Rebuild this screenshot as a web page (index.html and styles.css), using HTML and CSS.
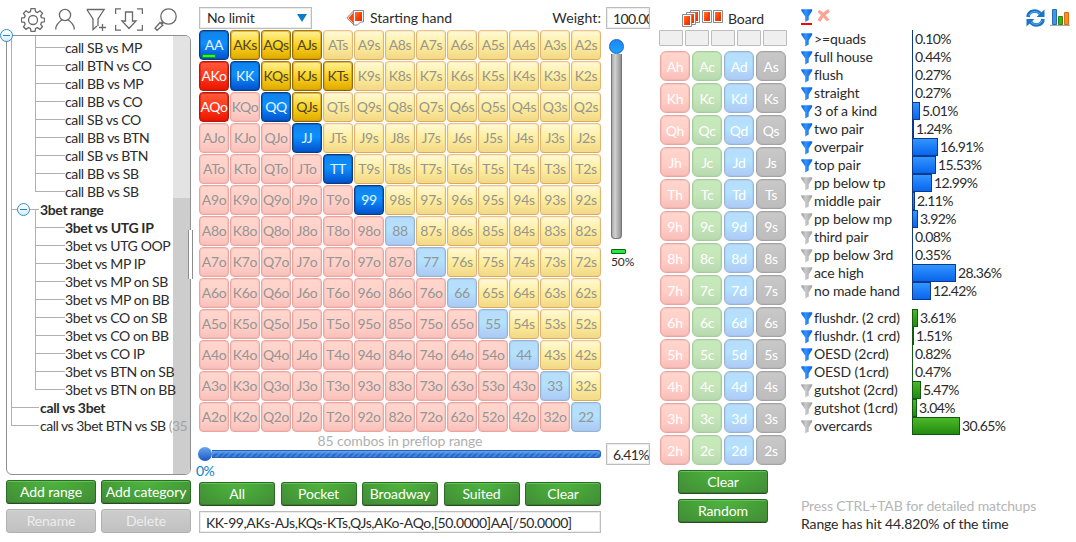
FILE: index.html
```html
<!DOCTYPE html>
<html lang="en">
<head>
    <meta charset="UTF-8">
    <title>Range Explorer</title>
    <link rel="stylesheet" href="styles.css">
</head>
<body>
    <svg class="defs" width="0" height="0">
        <defs>
            <linearGradient id="funnel-blue" x1="0" y1="0" x2="1" y2="0">
                <stop offset="0" stop-color="#0c62d8"/>
                <stop offset=".4" stop-color="#3292ff"/>
                <stop offset="1" stop-color="#0a5fdc"/>
            </linearGradient>
            <linearGradient id="funnel-grey" x1="0" y1="0" x2="1" y2="0">
                <stop offset="0" stop-color="#9c9c9c"/>
                <stop offset=".4" stop-color="#cacaca"/>
                <stop offset="1" stop-color="#a0a0a0"/>
            </linearGradient>
            <linearGradient id="card-red" x1="0" y1="0" x2="1" y2="1">
                <stop offset="0" stop-color="#ff7430"/>
                <stop offset=".6" stop-color="#f83c00"/>
                <stop offset="1" stop-color="#e82c00"/>
            </linearGradient>
            <g id="card">
                <path d="M.5.5h9v12h-9z" fill="#fff" stroke="#8a8a8a"/>
                <path d="M2 2h6v9H2z" fill="url(#card-red)"/>
            </g>
        </defs>
    </svg>

    <div class="app">
        <aside class="sidebar">
            <div class="toolbar">
                <svg width="24" height="24" viewBox="0 0 24 24"><path d="M10 .7h4l.6 3 1.900.8L19 2.800 21.500 5.300 19.700 7.800l.8 1.800 3 .6v3.600l-3 .6-.8 1.900 1.800 2.500-2.500 2.500-2.500-1.700-1.900.8-.6 3h-4l-.6-3-1.900-.8L5 21.300 2.500 18.800l1.700-2.500-.8-1.900-3-.6v-3.600l3-.6.8-1.800L2.500 5.300 5 2.800l2.500 1.700 1.900-.8z"/><circle cx="12" cy="12" r="4.500"/></svg>
                <svg width="20" height="24" viewBox="0 0 20 24"><circle cx="10" cy="7" r="5.600"/><path d="M.7 21.500c0-5 3-7.500 6.500-9.700M19.300 21.500c0-5-3-7.500-6.500-9.700"/></svg>
                <svg width="20" height="24" viewBox="0 0 20 24"><path d="M.8 1.500h17.400L12 11v7M.8 1.500 7 11v10.500l4-3.500M13 19.500h7M16.500 16v7"/></svg>
                <svg width="28" height="24" viewBox="0 0 28 24"><path d="M.6 6V.8H6M22 .8h5.400V6M.6 17v5.200H6M22 22.200h5.400V17M10.500 4h7v9H21l-7 7.500L7 13h3.500z"/></svg>
                <svg width="23" height="24" viewBox="0 0 23 24"><circle cx="14.500" cy="8.500" r="7.700"/><path d="M8.500 13.500 7 15.500M9.500 14.500 8 16M6 14.500l2.800 2.800-5.800 5-2-2z"/></svg>
            </div>

            <div class="tree">
                <div class="scrollbar"><div class="scroll-thumb"></div></div>
                <ul class="tree-list" id="tree"></ul>
                <span class="collapse collapse-root"></span>
                <div class="splitter"></div>
            </div>

            <div class="button-grid">
                <button class="btn">Add range</button>
                <button class="btn">Add category</button>
                <button class="btn disabled">Rename</button>
                <button class="btn disabled">Delete</button>
            </div>
        </aside>

        <main class="hands">
            <div class="hands-header">
                <div class="select">No limit <span class="arrow"></span></div>
                <div class="title">
                    <svg width="19" height="16" viewBox="0 0 19 16"><path d="M8 .5 .8 8 8 15z" fill="#fff" stroke="#888"/><path d="M8 2 2.200 8 8 14z" fill="#fa4a18"/><path d="M7.500.5h10v11.500h-3l-3 3h-4z" fill="#fff" stroke="#888"/><path d="M9 2h7v9H9z" fill="url(#card-red)"/></svg>
                    <span>Starting hand</span>
                </div>
                <span class="weight-label">Weight:</span>
            </div>

            <div class="matrix" id="matrix"></div>

            <div class="combos">85 combos in preflop range</div>
            <div class="range-slider"><span class="knob"></span><span class="track"></span></div>
            <div class="range-min">0%</div>

            <div class="button-row">
                <button class="btn">All</button>
                <button class="btn">Pocket</button>
                <button class="btn">Broadway</button>
                <button class="btn">Suited</button>
                <button class="btn">Clear</button>
            </div>
            <div class="field range-text">KK-99,AKs-AJs,KQs-KTs,QJs,AKo-AQo,[50.0000]AA[/50.0000]</div>
        </main>

        <section class="weight">
            <div class="field">100.00</div>
            <div class="weight-slider"><span class="knob"></span><span class="track"></span></div>
            <div class="weight-mark"></div>
            <div class="weight-value">50%</div>
            <div class="field percent">6.41%</div>
        </section>

        <section class="board">
            <div class="title">
                <svg width="42" height="18" viewBox="0 0 42 18">
                    <use href="#card" x="8" y="1"/>
                    <use href="#card" x="4" y="3"/>
                    <use href="#card" x="0" y="5"/>
                    <use href="#card" x="20" y="1"/>
                    <use href="#card" x="31" y="1"/>
                </svg>
                <span>Board</span>
            </div>
            <div class="slots"><i></i><i></i><i></i><i></i><i></i></div>
            <div class="deck" id="deck"></div>
            <div class="board-buttons">
                <button class="btn">Clear</button>
                <button class="btn">Random</button>
            </div>
        </section>

        <section class="stats">
            <div class="stats-header">
                <svg width="12" height="16" viewBox="0 0 12 16"><path d="M.3.300h10.900v1.500L7.700 7.500v3.500L4.200 13V7.500L.3 1.800z" fill="url(#funnel-blue)"/><path d="M0 14h11v2H0z" fill="#f00"/></svg>
                <svg width="14" height="13" viewBox="0 0 14 13"><path d="M1.500 2c3 2 7 5.500 9.500 9.500M12 1.500C8 4 4 7.500 2 12" fill="none" stroke="#fba396" stroke-width="3.300"/></svg>
                <span class="spacer"></span>
                <svg width="19" height="18" viewBox="0 0 19 18"><g fill="none" stroke="#1c74c8" stroke-width="3.600"><path d="M2 8C2.500 1 11 .5 14.500 5M17 10c-.5 7-9 7.500-12.500 3"/></g><path d="M18.500.5V8h-8zM.5 17.500V10h8z" fill="#1c74c8"/><path d="M3 6.500C4.500 2 11 1.500 14 5M16 11.500c-1.500 4.500-8 5-11 1.500" fill="none" stroke="#5cb5f2"/></svg>
                <svg width="20" height="17" viewBox="0 0 20 17"><path d="M2.500.5h4v15h-4z" fill="#3b9ae6" stroke="#286cb0"/><path d="M8.500 7.500h4v8h-4z" fill="#43b022" stroke="#2d8515"/><path d="M14.500 3.500h4v12h-4z" fill="#ff8a20" stroke="#e06a10"/><path d="M0 16.300h20" stroke="#777" stroke-width=".8"/></svg>
            </div>
            <div class="stat-list" id="made"></div>
            <div class="stat-list draws" id="draws"></div>
            <p class="hint">Press CTRL+TAB for detailed matchups</p>
            <p class="summary">Range has hit 44.820% of the time</p>
        </section>
    </div>

    <script src="script.js"></script>
</body>
</html>
```
FILE: styles.css
```css
* {
    box-sizing: border-box;
}

body {
    margin: 0;
    background: #fff;
    color: #2b2b2b;
    font-family: Lato, "Open Sans", sans-serif;
    font-size: 14px;
    line-height: 18px;
    letter-spacing: -0.12px;
    overflow: hidden;
}

.defs {
    position: absolute;
}

.app {
    display: flex;
    height: 542px;
    white-space: nowrap;
}

/* sidebar */
.sidebar {
    width: 191px;
    padding-left: 6px;
    flex: none;
}

.toolbar {
    display: flex;
    align-items: flex-start;
    height: 35px;
    padding: 8px 0 0 15px;
}

.toolbar svg {
    fill: none;
    stroke: #6a6a6a;
    stroke-width: 1.3;
    flex: none;
}

.toolbar svg:nth-child(2) { margin-left: 10px; }
.toolbar svg:nth-child(3) { margin-left: 11px; }
.toolbar svg:nth-child(4) { margin-left: 9px; }
.toolbar svg:nth-child(5) { margin-left: 11px; }

.tree {
    position: relative;
    width: 185px;
    height: 440px;
    border: 1px solid #8f8f8f;
    border-radius: 6px;
}

.scrollbar {
    position: absolute;
    top: 0;
    right: 0;
    bottom: 0;
    width: 17px;
    padding-top: 162px;
    background: #e3e3e3;
    border-radius: 0 5px 5px 0;
    overflow: hidden;
}

.scroll-thumb {
    height: 100%;
    background: #cdcdcd;
}

.tree-list {
    position: relative;
    height: 438px;
    margin: 0;
    padding: 3px 0 0 4px;
    list-style: none;
    line-height: 17px;
    letter-spacing: -0.38px;
    overflow: hidden;
}

.tree-list li {
    position: relative;
    height: 18px;
    padding-left: 29px;
}

.tree-list li.child {
    padding-left: 54px;
}

/* connector lines */
.tree-list li::before,
.tree-list li::after {
    content: "";
    position: absolute;
    background: #b0b0b0;
}

.tree-list li::before {
    left: 0;
    top: -9px;
    width: 1px;
    height: 18px;
}

.tree-list li.child::before {
    box-shadow: 24px 0 #b0b0b0;
}

.tree-list li::after {
    left: 0;
    top: 8px;
    width: 28px;
    height: 1px;
}

.tree-list li.child::after {
    left: 24px;
    width: 30px;
}

.tree-list .bold {
    font-weight: bold;
    letter-spacing: -0.35px;
}

.tree-list small {
    font-size: inherit;
    color: #a4a4a4;
}

.tree-list .long {
    letter-spacing: -0.5px;
}

.collapse {
    position: absolute;
    z-index: 1;
    left: 6px;
    top: 2px;
    width: 13px;
    height: 13px;
    border: 1px solid #2d90cc;
    border-radius: 50%;
    background: linear-gradient(#fff, #d8eefb);
}

.collapse::after {
    content: "";
    position: absolute;
    left: 2px;
    top: 5px;
    width: 7px;
    height: 1px;
    background: #2d80b8;
}

.collapse-root {
    left: -7px;
    top: -7px;
}

.splitter {
    position: absolute;
    left: 181px;
    top: 194px;
    width: 5px;
    height: 49px;
    border: solid #8c8c8c;
    border-width: 0 1px;
    background: #fff;
}

/* buttons */
.btn {
    width: 100%;
    height: 24px;
    padding: 0 0 1px;
    border: 1px solid #2b6a26;
    border-bottom-color: #224f1d;
    border-radius: 3px;
    background: radial-gradient(ellipse at 50% 0, #4fb440, #46a038 55%, #438a37);
    box-shadow: inset 0 1px #5fc450, inset 0 -1px #3d7d32;
    color: #fff;
    font: inherit;
    letter-spacing: inherit;
    white-space: nowrap;
}

.btn.disabled {
    border-color: #b0b0b0;
    background: linear-gradient(#cdcdcd, #c1c1c1);
    box-shadow: inset 0 1px #d3d3d3;
    color: #ececec;
}

.button-grid {
    display: grid;
    grid-template-columns: 90px 90px;
    gap: 5px;
    padding-top: 5px;
}

.button-row {
    display: grid;
    grid-template-columns: repeat(5, 76px);
    justify-content: space-between;
}

/* starting hands */
.hands {
    width: 402px;
    margin-left: 8px;
    flex: none;
}

.hands-header {
    display: flex;
    height: 30px;
    padding-top: 7px;
    line-height: 22px;
}

.select {
    display: flex;
    align-items: center;
    justify-content: space-between;
    width: 113px;
    height: 22px;
    padding: 0 4px 0 7px;
    border: 1px solid #bcbcbc;
    box-shadow: inset 0 0 0 1px #ececec;
}

.arrow {
    border: 5px solid transparent;
    border-top: 8px solid #0a7ccc;
    border-bottom: 0;
}

.title {
    display: flex;
}

.hands-header .title {
    gap: 5px;
    padding-left: 34px;
    letter-spacing: 0;
}

.hands-header .title svg {
    margin-top: 3px;
}

.weight-label {
    margin-left: auto;
    letter-spacing: 0.1px;
}

.field {
    height: 22px;
    padding-left: 6px;
    border: 1px solid #bcbcbc;
    box-shadow: inset 0 0 0 1px #ececec;
    line-height: 21px;
    overflow: hidden;
}

.matrix {
    display: grid;
    grid-template-columns: repeat(13, 30px);
    grid-auto-rows: 30px;
    gap: 1px;
}

.cell {
    position: relative;
    border: 1px solid;
    border-radius: 4px;
    color: #959595;
    line-height: 28px;
    text-align: center;
    letter-spacing: -0.35px;
}

.cell.suited {
    border-color: #e5c19d #dfb477 #dba957;
    background: linear-gradient(#fff9d8, #ffee9c 50%, #f0d888);
    box-shadow: inset 0 0 0 1px rgba(255, 220, 130, .4);
}

.cell.offsuit {
    border-color: #eba5a1;
    background: linear-gradient(#ffd6cd, #ffd0c8 60%, #f8c0ba);
    box-shadow: inset 0 0 0 1px rgba(240, 170, 165, .35);
}

.cell.pair {
    border-color: #97b4cf;
    background: linear-gradient(#b8dcfa, #b3e2ff 45%, #adc8f2);
    box-shadow: inset 0 0 0 1px rgba(150, 195, 235, .4);
}

.cell.suited.on {
    border-color: #a87820 #97690e #8c6206;
    background: linear-gradient(#fff19a, #fbd31c 50%, #dfa900);
    box-shadow: inset 0 0 0 1px rgba(205, 150, 10, .6);
    color: #4c4430;
}

.cell.offsuit.on {
    border-color: #b01c10;
    background: linear-gradient(#ff5a3c, #ff3a1c 50%, #e81400);
    box-shadow: inset 0 0 0 1px rgba(220, 20, 0, .6);
    color: #fff;
}

.cell.pair.on {
    border-color: #093f78;
    background: linear-gradient(#1280ea, #0c90fc 45%, #0450cf);
    box-shadow: inset 0 0 0 1px rgba(0, 75, 175, .5);
    color: #e6f2ff;
}

.cell .partial {
    position: absolute;
    left: 2px;
    bottom: 1px;
    width: 14px;
    height: 4px;
    border: 1px solid #0a9a20;
    border-radius: 1px;
    background: #35ee4b;
}

.combos {
    height: 17px;
    color: #b0b0b0;
    text-align: center;
}

.knob {
    display: block;
    flex: none;
    border-radius: 50%;
    background: linear-gradient(#68a8f0, #1c55c4);
}

.range-slider {
    display: flex;
    align-items: center;
    height: 14px;
    margin-top: -2px;
    margin-left: -1px;
}

.range-slider .knob {
    width: 14px;
    height: 14px;
}

.range-slider .track {
    flex: 1;
    height: 8px;
    border: 1px solid #2463b8;
    border-left: 0;
    border-radius: 0 3px 3px 0;
    background:
        linear-gradient(rgba(110, 170, 240, .9), rgba(60, 120, 220, .1) 60%),
        repeating-linear-gradient(135deg, #2869cf 0 2px, #4584dc 2px 4px);
}

.range-min {
    height: 21px;
    margin-left: -3px;
    padding-top: 1px;
    color: #0a7fc6;
    letter-spacing: -0.6px;
}

.range-text {
    margin-top: 5px;
    letter-spacing: -0.4px;
}

/* weight */
.weight {
    width: 44px;
    margin-left: 5px;
    padding-top: 7px;
    flex: none;
}

.weight .field {
    letter-spacing: -0.6px;
}

.weight-slider {
    width: 21px;
    padding-top: 10px;
}

.weight-slider .knob {
    position: relative;
    width: 15px;
    height: 15px;
    margin-left: 3px;
    border: 1px solid #1a5ec8;
    background: linear-gradient(#1e86f0, #18a4ff);
}

.weight-slider .track {
    display: block;
    width: 11px;
    height: 185px;
    margin-left: 5px;
    border: 1px solid #777;
    border-top: 0;
    border-radius: 0 0 4px 4px;
    background: linear-gradient(to right, #aaa, #d2d2d2 35%, #909090);
}

.weight-mark {
    width: 15px;
    height: 5px;
    margin: 10px 0 0 5px;
    border: 1px solid #0b6416;
    border-radius: 1px;
    background: #28e83c;
}

.weight-value {
    height: 18px;
    margin: -1px 0 172px 5px;
    font-size: 12px;
}

/* board */
.board {
    width: 128px;
    margin-left: 9px;
    flex: none;
}

.board .title {
    gap: 4px;
    height: 30px;
    padding: 9px 0 0 23px;
}

.board .title span {
    padding-top: 1px;
}

.slots {
    display: flex;
    gap: 2px;
}

.slots i {
    width: 24px;
    height: 16px;
    border: 1px solid #bcbcbc;
    border-radius: 1px;
    background: #efefef;
}

.deck {
    display: grid;
    grid-template-columns: repeat(4, 30px);
    grid-auto-rows: 30px;
    gap: 2px;
    padding: 5px 0 0 1px;
}

.card {
    border: 1px solid;
    border-radius: 6px;
    color: #fff;
    line-height: 29px;
    text-align: center;
    letter-spacing: -0.3px;
}

.card.h {
    border-color: #eba5a1;
    background: linear-gradient(#ffd6cd, #ffcdc5 60%, #f6bdb7);
    box-shadow: inset 0 0 0 1px rgba(240, 170, 165, .35);
}

.card.c {
    border-color: #a5cd9c;
    background: linear-gradient(#c8e9bb, #c5e6b9 50%, #b8d8b0);
    box-shadow: inset 0 0 0 1px rgba(170, 215, 160, .4);
}

.card.d {
    border-color: #97b4cf;
    background: linear-gradient(#b8dcfa, #b3e2ff 45%, #adc8f2);
    box-shadow: inset 0 0 0 1px rgba(150, 195, 235, .4);
}

.card.s {
    border-color: #a2a2a2;
    background: linear-gradient(#c9c9c9, #c2c2c2 50%, #bcbcbc);
    box-shadow: inset 0 0 0 1px rgba(175, 175, 175, .4);
}

.board-buttons {
    display: grid;
    gap: 5px;
    width: 90px;
    margin: 5px 0 0 19px;
}

/* statistics */
.stats {
    flex: 1;
    margin-left: 14px;
}

.stats-header {
    display: flex;
    height: 30px;
    padding: 9px 6px 0 0;
}

.stats-header svg:nth-child(2) { margin-left: 4px; }
.stats-header svg:nth-child(5) { margin-left: 5px; }

.spacer {
    flex: 1;
}

.stat {
    display: flex;
    height: 18px;
}

.stat svg {
    margin-top: 3px;
}

.stat-name {
    width: 98px;
    padding-left: 1px;
    line-height: 18px;
}

.bar {
    height: 18px;
    margin-left: 1px;
    margin-right: 2px;
    border: 1px solid #0b398c;
    background: linear-gradient(#3295ff, #0866ee);
}

.bar.thin {
    border-right: 0;
}

.stat-value {
    line-height: 18px;
    letter-spacing: -0.6px;
}

.draws {
    margin-top: 9px;
}

.draws .bar {
    border-color: #0f5a10;
    background: linear-gradient(#4db828, #228a10);
}

.hint,
.summary {
    margin: 0;
}

.hint {
    margin-top: 62px;
    color: #b5b5b5;
    letter-spacing: -0.15px;
}
```
FILE: script.js
```js
const ranks = 'AKQJT98765432'.split('');
const selected = ['AA', 'KK', 'QQ', 'JJ', 'TT', '99', 'AKs', 'AQs', 'AJs', 'KQs', 'KJs', 'KTs', 'QJs', 'AKo', 'AQo'];

// Starting hand matrix
const matrix = document.getElementById('matrix');
ranks.forEach((row, i) => {
    ranks.forEach((col, j) => {
        const type = i === j ? 'pair' : i < j ? 'suited' : 'offsuit';
        const hand = i === j ? row + col : i < j ? row + col + 's' : col + row + 'o';
        const cell = document.createElement('div');
        cell.className = 'cell ' + type + (selected.includes(hand) ? ' on' : '');
        cell.textContent = hand;
        if (hand === 'AA') cell.innerHTML += '<span class="partial"></span>';
        matrix.appendChild(cell);
    });
});

// Board cards
const deck = document.getElementById('deck');
ranks.forEach(rank => {
    'hcds'.split('').forEach(suit => {
        deck.innerHTML += `<div class="card ${suit}">${rank}${suit}</div>`;
    });
});

// Range tree: [text, class]
const tree = [
    ['call SB vs MP', 'child'],
    ['call BTN vs CO', 'child'],
    ['call BB vs MP', 'child'],
    ['call BB vs CO', 'child'],
    ['call SB vs CO', 'child'],
    ['call BB vs BTN', 'child'],
    ['call SB vs BTN', 'child'],
    ['call BB vs SB', 'child'],
    ['call BB vs SB', 'child'],
    ['<span class="collapse"></span>3bet range', 'bold'],
    ['3bet vs UTG IP', 'child bold'],
    ['3bet vs UTG OOP', 'child'],
    ['3bet vs MP IP', 'child'],
    ['3bet vs MP on SB', 'child'],
    ['3bet vs MP on BB', 'child'],
    ['3bet vs CO on SB', 'child'],
    ['3bet vs CO on BB', 'child'],
    ['3bet vs CO IP', 'child'],
    ['3bet vs BTN on SB', 'child'],
    ['3bet vs BTN on BB', 'child'],
    ['call vs 3bet', 'bold'],
    ['call vs 3bet BTN vs SB <small>(35</small>', 'long']
];
document.getElementById('tree').innerHTML = tree.map(([text, cls]) => `<li class="${cls}">${text}</li>`).join('');

// Hit statistics: [name, percent, filter active]
const made = [
    ['&gt;=quads', '0.10', 1],
    ['full house', '0.44', 1],
    ['flush', '0.27', 1],
    ['straight', '0.27', 1],
    ['3 of a kind', '5.01', 1],
    ['two pair', '1.24', 1],
    ['overpair', '16.91', 1],
    ['top pair', '15.53', 1],
    ['pp below tp', '12.99', 0],
    ['middle pair', '2.11', 0],
    ['pp below mp', '3.92', 0],
    ['third pair', '0.08', 0],
    ['pp below 3rd', '0.35', 0],
    ['ace high', '28.36', 0],
    ['no made hand', '12.42', 0]
];
const draws = [
    ['flushdr. (2 crd)', '3.61', 1],
    ['flushdr. (1 crd)', '1.51', 1],
    ['OESD (2crd)', '0.82', 1],
    ['OESD (1crd)', '0.47', 1],
    ['gutshot (2crd)', '5.47', 0],
    ['gutshot (1crd)', '3.04', 0],
    ['overcards', '30.65', 0]
];

function renderStats(id, rows) {
    document.getElementById(id).innerHTML = rows.map(([name, value, active]) => `
        <div class="stat">
            <svg width="12" height="14" viewBox="0 0 12 14"><path d="M.3.3h10.900v1.500L7.700 7.500V11.500L4.200 13.500v-6L.3 1.800z" fill="url(#funnel-${active ? 'blue' : 'grey'})"/></svg>
            <span class="stat-name">${name}</span>
            <span class="bar${value < 1 ? ' thin' : ''}" style="width: ${Math.max(1, Math.round(value * 1.56))}px"></span>
            <span class="stat-value">${value}%</span>
        </div>`).join('');
}

renderStats('made', made);
renderStats('draws', draws);
```
